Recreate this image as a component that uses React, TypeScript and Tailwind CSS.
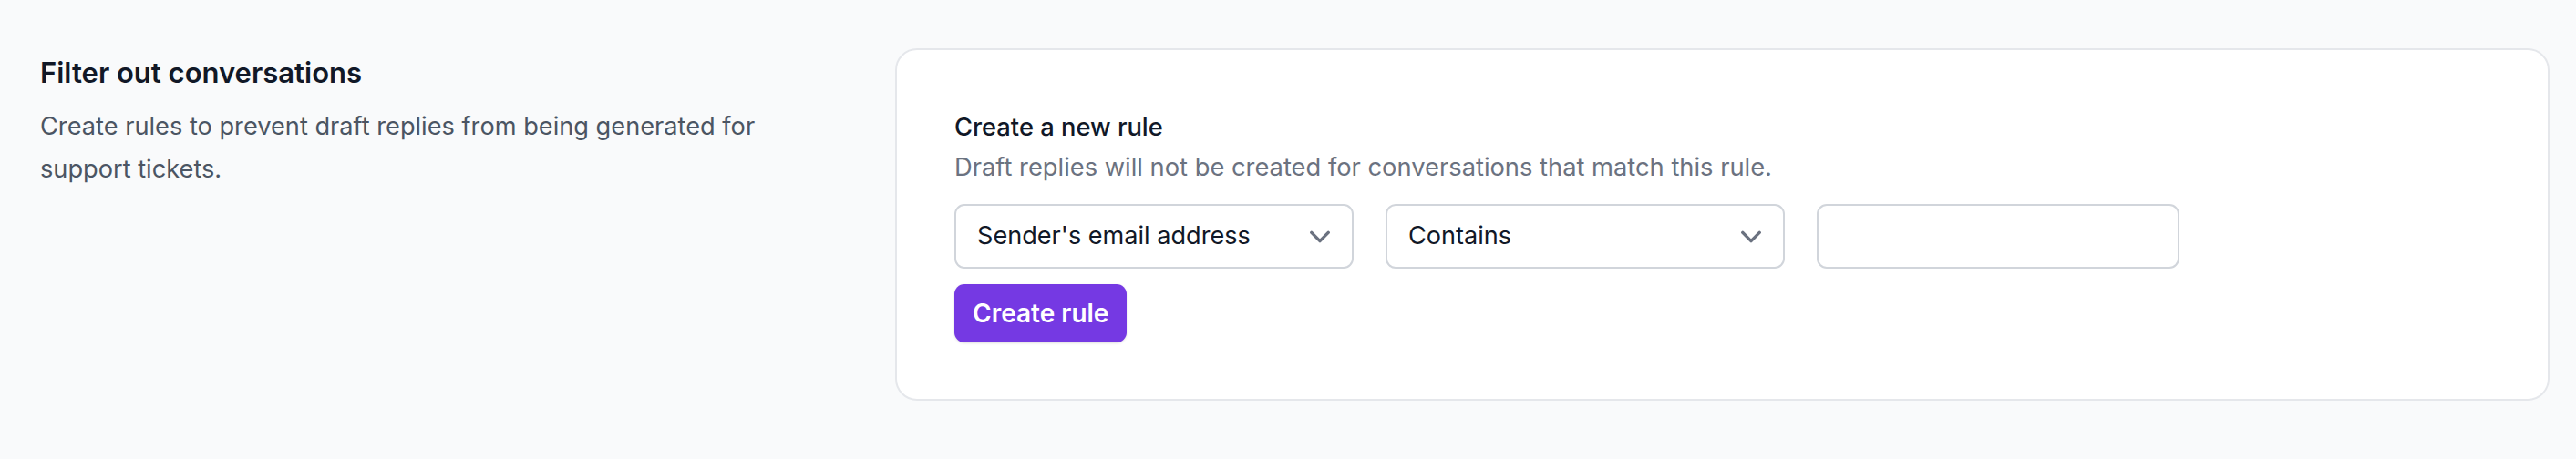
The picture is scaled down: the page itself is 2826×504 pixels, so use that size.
export default function App() {
  return (
    <div className="min-h-[504px] w-full bg-[#f9fafb] font-['Inter','Liberation_Sans',sans-serif]">
      <div className="flex gap-[78px] pl-[44px] pr-[29px] pt-[53px] pb-[64px]">
        <div className="w-[860px] shrink-0 pt-[8px]">
          <h2 className="text-[31px] leading-[38px] font-semibold text-[#111827]">Filter out conversations</h2>
          <p className="mt-[16px] text-[27.2px] leading-[47px] text-[#4b5563]">
            Create rules to prevent draft replies from being generated for support tickets.
          </p>
        </div>

        <div className="flex-1 rounded-[24px] border-2 border-[#e5e7eb] bg-white pl-[63px] pr-[63px] pt-[67px] pb-[62px]">
          <h3 className="text-[27.3px] leading-[36px] font-medium text-[#111827]">Create a new rule</h3>
          <p className="mt-[6px] text-[27.3px] leading-[40px] text-[#6b7280]">
            Draft replies will not be created for conversations that match this rule.
          </p>

          <div className="mt-[20px] flex gap-[35px]">
            <RuleSelect label="Sender's email address" />
            <RuleSelect label="Contains" />
            <input
              type="text"
              className="h-[71px] w-[398px] rounded-[11px] border-2 border-[#d1d5db] bg-white px-[24px] text-[27px] text-[#111827] outline-none"
            />
          </div>

          <button className="mt-[17px] flex h-[64px] items-center rounded-[11px] bg-[#7539e3] px-[20px] text-[28px] font-semibold text-white shadow-sm">
            Create rule
          </button>
        </div>
      </div>
    </div>
  );
}

function RuleSelect({ label }: { label: string }) {
  return (
    <div className="flex h-[71px] w-[438px] items-center justify-between rounded-[11px] border-2 border-[#d1d5db] bg-white pl-[23px] pr-[12px]">
      <span className="text-[27.1px] text-[#111827]">{label}</span>
      <svg className="h-[46px] w-[46px]" viewBox="0 0 20 20" fill="none" stroke="#6b7280" strokeWidth={1.5} strokeLinecap="round" strokeLinejoin="round">
        <path d="M6 8l4 4 4-4" />
      </svg>
    </div>
  );
}
